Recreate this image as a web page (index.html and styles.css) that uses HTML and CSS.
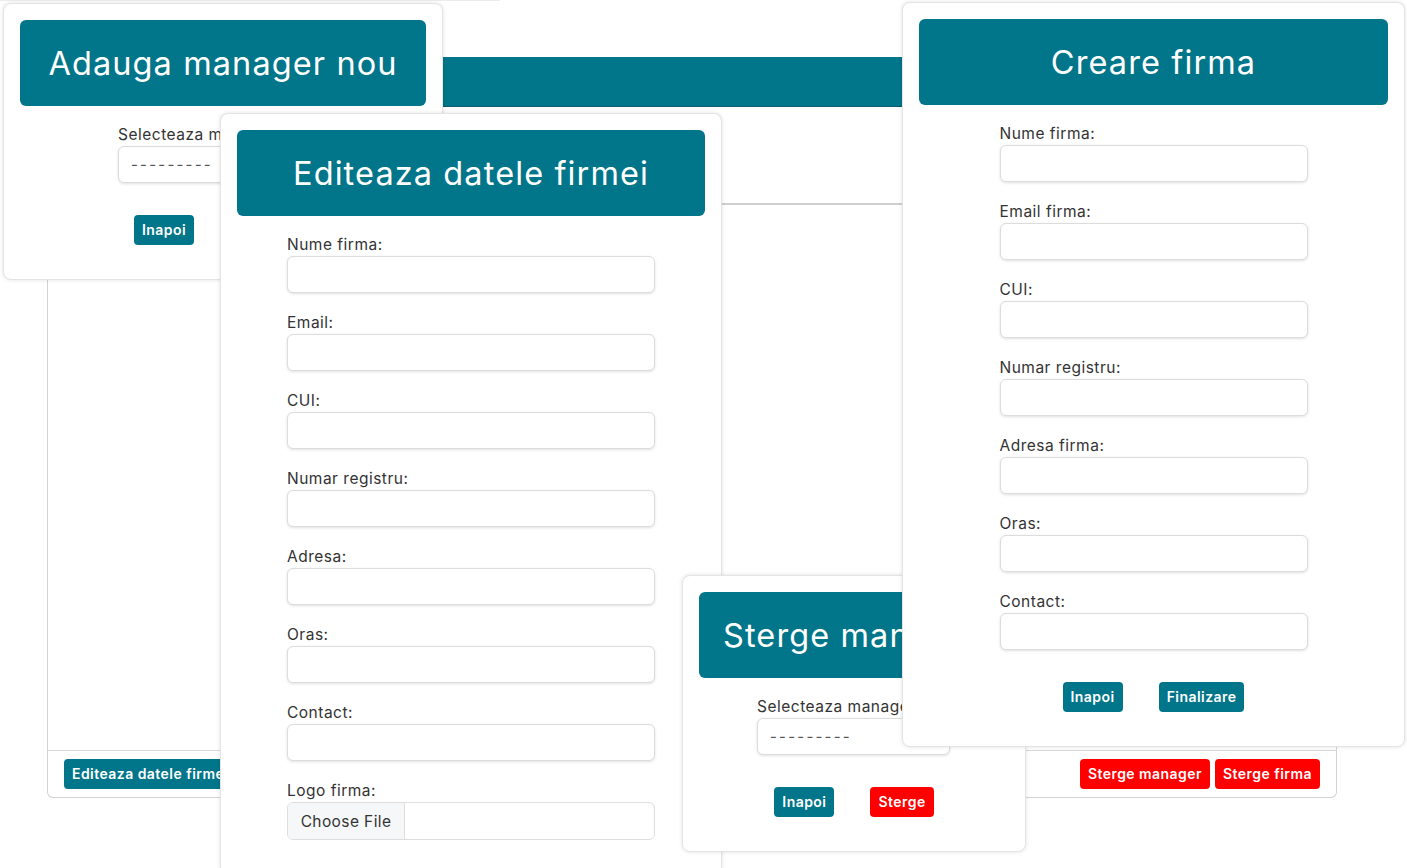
FILE: index.html
```html
<!DOCTYPE html>
<html lang="ro">
<head>
<meta charset="utf-8">
<title>Firme</title>
<link rel="stylesheet" href="styles.css">
</head>
<body>
<div class="ghost"></div>

<div class="page">
  <div class="topbar"></div>
  <div class="card">
    <div class="card-body"></div>
    <div class="card-footer">
      <button class="btn btn-teal">Editeaza datele firmei</button>
      <div class="btn-group">
        <button class="btn btn-red">Sterge manager</button>
        <button class="btn btn-red">Sterge firma</button>
      </div>
    </div>
  </div>
</div>

<section class="win win-add">
  <div class="win-head">Adauga manager nou</div>
  <form class="form form-add">
    <label class="lbl">Selecteaza manager:</label>
    <div class="select">---------</div>
  </form>
  <div class="actions">
    <button class="btn btn-teal">Inapoi</button>
    <button class="btn btn-teal">Adauga</button>
  </div>
</section>

<section class="win win-edit">
  <div class="win-head">Editeaza datele firmei</div>
  <form class="form form-edit">
    <label class="lbl">Nume firma:</label>
    <div class="input"></div>
    <label class="lbl">Email:</label>
    <div class="input"></div>
    <label class="lbl">CUI:</label>
    <div class="input"></div>
    <label class="lbl">Numar registru:</label>
    <div class="input"></div>
    <label class="lbl">Adresa:</label>
    <div class="input"></div>
    <label class="lbl">Oras:</label>
    <div class="input"></div>
    <label class="lbl">Contact:</label>
    <div class="input"></div>
    <label class="lbl">Logo firma:</label>
    <div class="file"><span class="file-btn">Choose File</span></div>
  </form>
</section>

<section class="win win-del">
  <div class="win-head">Sterge manager</div>
  <form class="form form-del">
    <label class="lbl">Selecteaza manager:</label>
    <div class="select">---------</div>
  </form>
  <div class="actions">
    <button class="btn btn-teal">Inapoi</button>
    <button class="btn btn-red">Sterge</button>
  </div>
</section>

<section class="win win-create">
  <div class="win-head">Creare firma</div>
  <form class="form form-create">
    <label class="lbl">Nume firma:</label>
    <div class="input"></div>
    <label class="lbl">Email firma:</label>
    <div class="input"></div>
    <label class="lbl">CUI:</label>
    <div class="input"></div>
    <label class="lbl">Numar registru:</label>
    <div class="input"></div>
    <label class="lbl">Adresa firma:</label>
    <div class="input"></div>
    <label class="lbl">Oras:</label>
    <div class="input"></div>
    <label class="lbl">Contact:</label>
    <div class="input"></div>
  </form>
  <div class="actions">
    <button class="btn btn-teal">Inapoi</button>
    <button class="btn btn-teal">Finalizare</button>
  </div>
</section>
</body>
</html>
```

FILE: styles.css
```css
* { box-sizing: border-box; }

html, body {
  margin: 0;
  padding: 0;
}

body {
  width: 1407px;
  height: 868px;
  position: relative;
  overflow: hidden;
  background: #fff;
  font-family: Inter, "Noto Sans", sans-serif;
  color: #333;
}

.ghost {
  position: absolute;
  left: -10px;
  top: 0;
  width: 510px;
  height: 432px;
  border-top: 1px solid #ececec;
  border-left: 1px solid #e6e6e6;
  border-radius: 0 0 0 8px;
}

/* background page */
.page {
  padding: 57px 70px 0 47px;
}

.topbar {
  height: 50px;
  background: #017589;
  border-bottom: 1px solid #0b5f6d;
}

.card {
  margin-top: 96px;
  height: 595px;
  border: 1px solid #d3d3d3;
  border-top: 2px solid #cfcfcf;
  border-radius: 6px;
  display: flex;
  flex-direction: column;
  background: #fff;
}

.card-body { flex: 1; }

.card-footer {
  border-top: 1px solid #d6d6d6;
  padding: 8px 16px;
  display: flex;
  justify-content: space-between;
  align-items: center;
}

.btn-group {
  display: flex;
  gap: 5px;
}

/* buttons */
.btn {
  font-family: Inter, "Noto Sans", sans-serif;
  font-size: 14px;
  font-weight: 600;
  letter-spacing: 0.45px;
  line-height: 22px;
  padding: 4px 8px;
  border: 0;
  border-radius: 4px;
  color: #fff;
  cursor: pointer;
}

.btn-teal { background: #017589; }
.btn-red { background: #ff0000; }

/* windows */
.win {
  position: absolute;
  background: #fff;
  border: 1px solid #e4e4e4;
  border-radius: 8px;
  box-shadow: 0 0 4px rgba(0, 0, 0, 0.12);
  padding: 16px;
}

.win-add { left: 3px; top: 3px; width: 440px; height: 277px; z-index: 1; }
.win-edit {
  left: 220px;
  top: 113px;
  width: 502px;
  height: 755px;
  border-bottom: 0;
  border-radius: 8px 8px 0 0;
  overflow: hidden;
  z-index: 2;
}
.win-del { left: 682px; top: 575px; width: 344px; height: 277px; z-index: 3; }
.win-create { left: 902px; top: 2px; width: 503px; height: 745px; z-index: 4; }

.win-head {
  height: 86px;
  background: #017589;
  border-radius: 6px;
  color: #fff;
  font-size: 32.5px;
  letter-spacing: 1.1px;
  font-weight: 400;
  display: flex;
  align-items: center;
  justify-content: center;
  white-space: nowrap;
  overflow: hidden;
  margin-bottom: 17px;
}

.win-del .win-head { justify-content: flex-start; padding-left: 24px; }

.form {
  margin: 0 auto;
  display: flex;
  flex-direction: column;
}

.form-add { width: 210px; margin-left: 98px; }
.form-edit { width: 368px; }
.form-del { width: 193px; margin-left: 58px; }
.form-create { width: 308px; }

.lbl {
  display: block;
  font-size: 15.5px;
  letter-spacing: 0.5px;
  line-height: 23px;
  color: #333;
  white-space: nowrap;
}

.input, .select {
  height: 37px;
  border: 1px solid #dcdcdc;
  border-radius: 6px;
  box-shadow: 0 1px 3px rgba(0, 0, 0, 0.12);
  background: #fff;
  margin-bottom: 18px;
}

.form .input:last-child,
.form .select:last-child { margin-bottom: 0; }

.select {
  padding: 0 12px;
  display: flex;
  align-items: center;
  font-size: 15px;
  color: #555;
  letter-spacing: 2.2px;
}

.file {
  height: 38px;
  border: 1px solid #dedede;
  border-radius: 6px;
  display: flex;
  overflow: hidden;
}

.file-btn {
  width: 117px;
  background: #f6f7f8;
  border-right: 1px solid #dedede;
  display: flex;
  align-items: center;
  justify-content: center;
  font-size: 15.5px;
  letter-spacing: 0.4px;
  color: #333;
}

.actions {
  margin-top: 32px;
  display: flex;
  justify-content: center;
  gap: 36px;
}

.win-add .actions { justify-content: flex-start; padding-left: 114px; }
```
